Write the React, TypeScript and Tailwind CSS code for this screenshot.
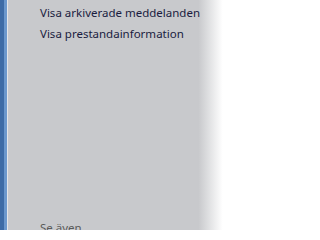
export default function App() {
  return (
    <div className="relative w-[227px] h-[230px] overflow-hidden bg-white" style={{ fontFamily: '"Noto Sans", "Open Sans", sans-serif' }}>
      <div className="flex h-full">
        <div className="w-[4px] bg-[#3d6ba6]" />
        <div className="w-[3px] bg-[#6b97cc]" />
        <div className="w-[1px] bg-[#e4e6ea]" />
        <div className="w-[219px] bg-[linear-gradient(to_right,#c8c9cc_0%,#c8c9cc_87%,#ffffff_98%)] flex flex-col">
          <div className="pl-[32px] pt-[2px] text-[11.5px] leading-[21px] text-[#1a1c40] flex flex-col">
            <span>Visa arkiverade meddelanden</span>
            <span>Visa prestandainformation</span>
          </div>
          <div className="mt-auto pl-[32px] text-[11.5px] leading-[16px] text-[#5a5a5a] translate-y-[6px]">Se även</div>
        </div>
      </div>
    </div>
  );
}
